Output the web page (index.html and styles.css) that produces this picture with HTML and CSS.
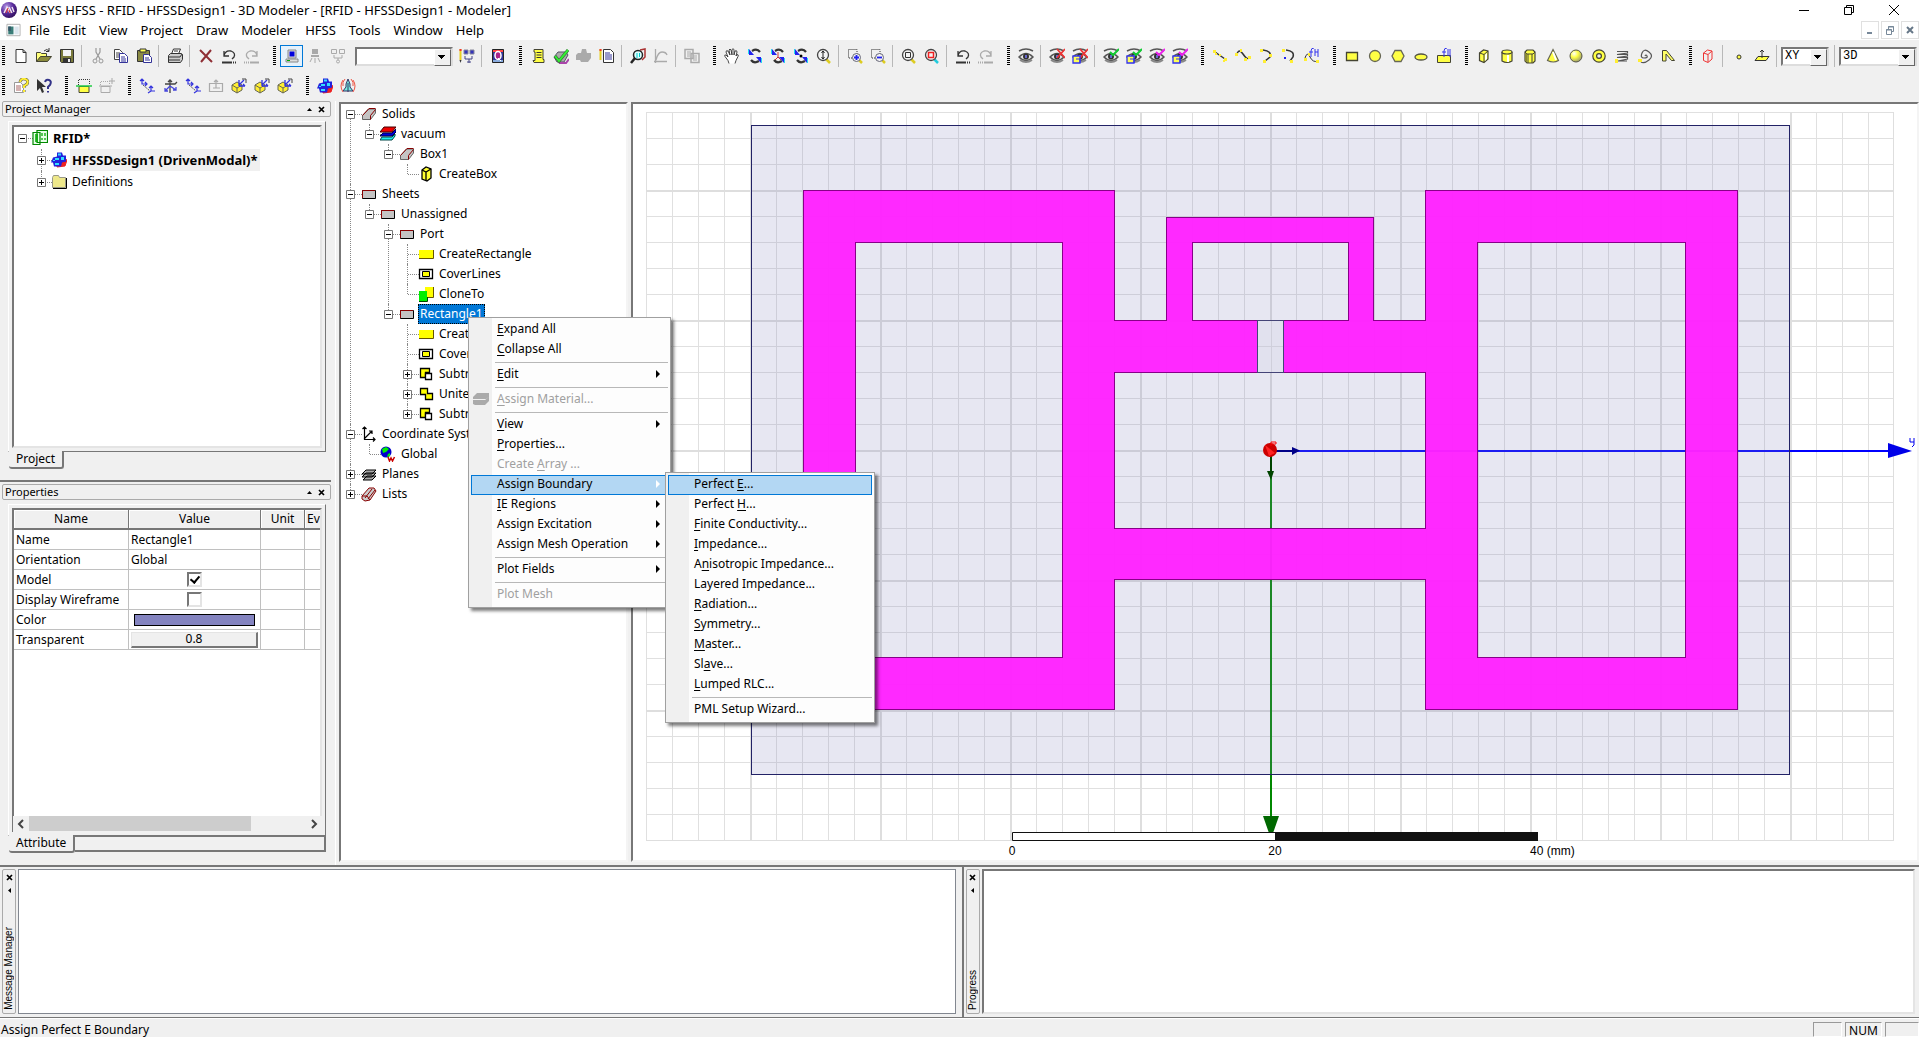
FILE: index.html
```html
<!DOCTYPE html>
<html lang="en">
<head>
<meta charset="utf-8">
<title>ANSYS HFSS - RFID - HFSSDesign1 - 3D Modeler</title>
<link rel="stylesheet" href="styles.css">
</head>
<body>
<svg class="sprite" aria-hidden="true">
  <defs>
    <radialGradient id="logo" cx=".35" cy=".3" r=".8"><stop offset="0" stop-color="#b79be8"/><stop offset=".5" stop-color="#5a2d9e"/><stop offset="1" stop-color="#2a0a50"/></radialGradient>
    <radialGradient id="ball" cx=".35" cy=".3" r=".8"><stop offset="0" stop-color="#fff"/><stop offset=".4" stop-color="#ff4"/><stop offset="1" stop-color="#887"/></radialGradient>
    <pattern id="minor" width="26" height="26" patternUnits="userSpaceOnUse"><path d="M0 0h26v1H1v25H0z" fill="#e0e0e0"/></pattern>
    <pattern id="major" width="130" height="130" patternUnits="userSpaceOnUse"><path d="M0 0h130v2H2v128H0z" fill="#dedede"/></pattern>
  </defs>
  <symbol id="i-new" viewBox="0 0 16 16"><path d="M3 1.500h7l3 3v10H3zM10 1.500v3h3" fill="#fff" stroke="#333"/></symbol>
  <symbol id="i-open" viewBox="0 0 16 16"><path d="M.5 13.500v-9h4l1 1h5v3" fill="#ffff7a" stroke="#443"/><path d="M.5 13.500l4-5h11l-4 5z" fill="#8c8c3c" stroke="#443"/><path d="M8 3q3-3 5 0M13 0v3.500h-3" fill="none" stroke="#333"/></symbol>
  <symbol id="i-save" viewBox="0 0 16 16"><path d="M1.500 1.500h13v13h-12l-1-1z" fill="#7a7a3c" stroke="#333"/><path d="M4 2h8v6H4z" fill="#f4f4f4"/><path d="M4 10h8v4H4z" fill="#333"/><path d="M9 11h2v3H9z" fill="#eee"/></symbol>
  <symbol id="i-cut" viewBox="0 0 16 16"><path d="M6 0v4l4 7M10 0v4l-4 7" fill="none" stroke="#999" stroke-width="1.200"/><circle cx="5" cy="13" r="2" fill="none" stroke="#999"/><circle cx="11" cy="13" r="2" fill="none" stroke="#999"/></symbol>
  <symbol id="i-copy" viewBox="0 0 16 16"><path d="M1.500 1.500h5l3 3v7h-8z" fill="#fff" stroke="#444"/><path d="M3 5h4M3 7h4M3 9h3" stroke="#444"/><path d="M6.500 5.500h5l3 3v6h-8z" fill="#fff" stroke="#339"/><path d="M8 9h4M8 11h5M8 13h5" stroke="#339"/></symbol>
  <symbol id="i-paste" viewBox="0 0 16 16"><path d="M1.500 2.500h12v11h-12z" fill="#8a8a44" stroke="#333"/><path d="M4 1h6v3H4z" fill="#ff5" stroke="#333"/><path d="M7.500 6.500h5l3 3v5h-8z" fill="#fff" stroke="#339"/><path d="M9 10h4M9 12h5" stroke="#339"/></symbol>
  <symbol id="i-print" viewBox="0 0 16 16"><path d="M4.500 6l2-5h7l-2 5z" fill="#fff" stroke="#333"/><path d="M1.500 7.500l2-2h11l1 1v5l-2 3h-12z" fill="#ccc" stroke="#333"/><path d="M2 9h11M2 12h11M13 9l2-3M7 3h4" stroke="#333"/></symbol>
  <symbol id="i-del" viewBox="0 0 16 16"><path d="M2 2l12 12M13 2L3 14" stroke="#8f2f35" stroke-width="2"/></symbol>
  <symbol id="i-undo" viewBox="0 0 16 16"><path d="M3 8q1-6 7-5 5 2 3 6l-2 2M3 3v5h5" fill="none" stroke="#333" stroke-width="1.300"/><path d="M1 14.500h9" stroke="#333" stroke-width="2"/><path d="M10 14.500h6" stroke="#333" stroke-width="2" stroke-dasharray="1 1"/></symbol>
  <symbol id="i-redo" viewBox="0 0 16 16"><path d="M13 8q-1-6-7-5-5 2-3 6l2 2M13 3v5H8" fill="none" stroke="#aaa" stroke-width="1.300"/><path d="M6 14.500h9" stroke="#aaa" stroke-width="2"/><path d="M0 14.500h6" stroke="#aaa" stroke-width="2" stroke-dasharray="1 1"/></symbol>
  <symbol id="i-pc" viewBox="0 0 16 16"><path d="M4 2h8v8H4z" fill="#ddd" stroke="#888"/><path d="M5.500 3.500h5v5h-5z" fill="#00d"/><path d="M2 11h12v3H2z" fill="#ddd" stroke="#888"/><path d="M3 12.500h3" stroke="#0a0"/></symbol>
  <symbol id="i-remote" viewBox="0 0 16 16"><path d="M5 1h6v5H5zM4 7h8v2H4z" fill="#aaa"/><path d="M8 10v5M5 10l-2 4M11 10l2 4" stroke="#aaa"/></symbol>
  <symbol id="i-dist" viewBox="0 0 16 16"><path d="M1.500 1.500h5v4h-5zM9.500 1.500h5v4h-5zM4 7v3h8V7M8 10v2" fill="none" stroke="#aaa"/><circle cx="8" cy="13.500" r="1.500" fill="none" stroke="#aaa"/></symbol>
  <symbol id="i-net" viewBox="0 0 16 16"><path d="M1.500 1v11" stroke="#e8d020" stroke-width="2"/><path d="M.5 2h2" stroke="#e33" stroke-width="2"/><path d="M.5 12l1 3 1-3" fill="#333"/><path d="M5 2h4v4H5zM11 2h4v4h-4z" fill="#33b" stroke="#889"/><path d="M6 8v3h7V8M10 11v4M8 14h4" fill="none" stroke="#448"/></symbol>
  <symbol id="i-q" viewBox="0 0 16 16"><path d="M2.500 1.500h11v13h-11z" fill="#339" stroke="#222"/><path d="M3 2h10v2H3z" fill="#f44"/><path d="M3 12h10v2H3z" fill="#8ad"/><ellipse cx="8" cy="7.500" rx="3" ry="4" fill="#a28" stroke="#fff" stroke-width="1.500"/><path d="M8 10l3 3" stroke="#fff"/></symbol>
  <symbol id="i-scroll" viewBox="0 0 16 16"><path d="M4 1.500h9v10h1v3H4l-1-2h2V4H4z" fill="#ff4" stroke="#443"/><path d="M6.500 4.500h5M6.500 7h5M6.500 9.500h5" stroke="#333"/></symbol>
  <symbol id="i-valid" viewBox="0 0 16 16"><path d="M1 9l4-5h8l2 3-4 7H4z" fill="#aaa" stroke="#556"/><path d="M6 15h7l3-4" stroke="#a4a" stroke-width="2" fill="none"/><path d="M2 8l4 5 9-11" fill="none" stroke="#363" stroke-width="3"/><path d="M2 8l4 5 9-11" fill="none" stroke="#3e3" stroke-width="2"/></symbol>
  <symbol id="i-blob" viewBox="0 0 16 16"><path d="M5 5l1-4h4l1 4h4v5l-3 4H5L4 12H0V7l2-2z" fill="#aaa"/></symbol>
  <symbol id="i-notes" viewBox="0 0 16 16"><path d="M1.500 1v11" stroke="#e8d020" stroke-width="2"/><path d="M.5 2h2" stroke="#e33" stroke-width="2"/><path d="M4.500 1.500h7l3 3v10h-10z" fill="#fff" stroke="#333"/><path d="M6 5h5M6 7h7M6 9h7M6 11h7" stroke="#339"/></symbol>
  <symbol id="i-find" viewBox="0 0 16 16"><path d="M10 2l5-1v8l-3 3" fill="none" stroke="#a33" stroke-width="1.500"/><circle cx="8" cy="7" r="4.500" fill="#dff" stroke="#222" stroke-width="1.500"/><path d="M7 5v5M9.500 5v4" stroke="#0cc"/><path d="M5 10l-4 5" stroke="#222" stroke-width="2.500"/></symbol>
  <symbol id="i-plot" viewBox="0 0 16 16"><path d="M2.500 1v14M1 13.500h13M3 12q2-8 6-8t5 3" fill="none" stroke="#aaa" stroke-width="1.300"/></symbol>
  <symbol id="i-report" viewBox="0 0 16 16"><path d="M1 1.500h8v9H1zM7 5.500h8v9H7z" fill="#f0f0f0" stroke="#aaa" stroke-width="1.500"/><path d="M3 4h4M3 6h3M3 8h3M9 8h4M9 10h4M9 12h4" stroke="#aaa"/></symbol>
  <symbol id="i-hand" viewBox="0 0 16 16"><path d="M5 15.500l-1-3-3-4q-1-2 1-1.500l2 2-2-5q0-2 2-1l2 4-1-5q1-2 2 0l1 5V1.500q1-1.500 2 0V7l1-4q2-1 2 1l-1 4 1-1.500q2 0 1 2l-2 4-1 3" fill="#fff" stroke="#333" stroke-width=".9"/></symbol>
  <symbol id="i-rot" viewBox="0 0 16 16"><path d="M5 3q5-3 8 1M12 13q-5 3-8-1" fill="none" stroke="#333" stroke-width="2.200"/><path d="M2 1v6h5z" fill="#22e"/><path d="M14 15V9H9z" fill="#22e"/><path d="M1.500 1v5M14.500 10v5" stroke="#2de"/></symbol>
  <symbol id="i-zoomv" viewBox="0 0 16 16"><path d="M10 11l4 4" stroke="#dc2" stroke-width="2.500"/><circle cx="7" cy="7" r="5.500" fill="#f4f4f4" stroke="#444" stroke-width="1.300"/><path d="M7 3v8M5.500 5L7 3l1.500 2M5.500 9L7 11l1.500-2" stroke="#222" fill="none"/></symbol>
  <symbol id="i-zin" viewBox="0 0 16 16"><path d="M10 8V1.500H1.500V10H6" fill="none" stroke="#333" stroke-dasharray="1 1"/><path d="M12 12l3 3" stroke="#dc2" stroke-width="2.500"/><circle cx="9.500" cy="9.500" r="4" fill="#f4f4f4" stroke="#667"/><path d="M9.500 7v5M7 9.500h5" stroke="#22e" stroke-width="1.800"/></symbol>
  <symbol id="i-zout" viewBox="0 0 16 16"><path d="M10 8V1.500H1.500V10H6" fill="none" stroke="#333" stroke-dasharray="1 1"/><path d="M12 12l3 3" stroke="#dc2" stroke-width="2.500"/><circle cx="9.500" cy="9.500" r="4" fill="#f4f4f4" stroke="#667"/><path d="M7 9.500h5" stroke="#22e" stroke-width="1.800"/></symbol>
  <symbol id="i-fit" viewBox="0 0 16 16"><path d="M10 11l4 4" stroke="#dc2" stroke-width="2.500"/><circle cx="7" cy="7" r="5.500" fill="#f4f4f4" stroke="#444" stroke-width="1.300"/><path d="M4.500 4.500h5v5h-5z" stroke="#333" fill="none"/></symbol>
  <symbol id="i-fitsel" viewBox="0 0 16 16"><path d="M10 11l4 4" stroke="#2cd" stroke-width="2.500"/><circle cx="7" cy="7" r="5.500" fill="#f4f4f4" stroke="#444" stroke-width="1.300"/><path d="M4.500 4.500h5v5h-5z" stroke="#e22" stroke-width="1.500" fill="none"/></symbol>
  <symbol id="i-eye" viewBox="0 0 16 16"><path d="M1 3q7-4 14 0" fill="none" stroke="#555" stroke-width="1.500"/><path d="M1 9q7-7 14 0-7 7-14 0z" fill="#e4e4e4" stroke="#555" stroke-width="1.500"/><circle cx="8" cy="8.500" r="3" fill="#333"/><path d="M7 7h2v3H7z" fill="#66c"/><path d="M2 12q6 4 12 0" fill="none" stroke="#888" stroke-width="2"/></symbol>
  <symbol id="i-x" viewBox="0 0 16 16"><path d="M8 1l8 9M16 1l-8 9" stroke="#e33" stroke-width="1.800"/></symbol>
  <symbol id="i-ckg" viewBox="0 0 16 16"><path d="M7 4l3 3 6-6" fill="none" stroke="#1c3" stroke-width="2"/></symbol>
  <symbol id="i-ckm" viewBox="0 0 16 16"><path d="M7 4l3 3 6-6" fill="none" stroke="#e2e" stroke-width="2"/></symbol>
  <symbol id="i-sub" viewBox="0 0 16 16"><path d="M1 8h7v7H1z" fill="#ff5" stroke="#33e" stroke-width="1.300"/><path d="M4 11h4v4" fill="none" stroke="#33e"/></symbol>
  <symbol id="i-line" viewBox="0 0 16 16"><path d="M3 4l10 7" stroke="#333" stroke-width="1.500"/><path d="M1 2h3v3H1zM7 6h2v2H7zM12 10h3v3h-3zM3 5h2v2H3zM11 12h2v2h-2z" fill="#fe3"/></symbol>
  <symbol id="i-spline" viewBox="0 0 16 16"><path d="M2 6q2-6 6 0t6 4" fill="none" stroke="#333" stroke-width="1.500"/><path d="M0 5h3v3H0zM5 1h2v3H5zM9 10h3v3H9zM13 8h3v3h-3z" fill="#fe3"/></symbol>
  <symbol id="i-arc" viewBox="0 0 16 16"><path d="M5 2q9 1 7 7l-5 4" fill="none" stroke="#333" stroke-width="1.500"/><path d="M2 1h3v3H2zM11 6h3v3h-3zM5 12h3v3H5z" fill="#fe3"/></symbol>
  <symbol id="i-arcc" viewBox="0 0 16 16"><path d="M5 2q9 1 7 7l-3 4" fill="none" stroke="#333" stroke-width="1.500"/><path d="M1 1h3v3H1zM9 12h3v3H9z" fill="#fe3"/><path d="M3 9h2v2H3z" fill="#22e"/></symbol>
  <symbol id="i-eq" viewBox="0 0 16 16"><path d="M1 10q2-7 5-1t8 4" fill="none" stroke="#333"/><path d="M0 10h3v3H0zM4 5h2v3H4zM12 12h3v3h-3z" fill="#fe3"/><path d="M10 0q-3 0-3 3v6M5 4h4M11 1v7M14 1v8M11 4h3" fill="none" stroke="#33e"/></symbol>
  <symbol id="i-rect" viewBox="0 0 16 16"><path d="M2.500 4.500h11v8h-11z" fill="#ff4" stroke="#443" stroke-width="1.300"/></symbol>
  <symbol id="i-circ" viewBox="0 0 16 16"><circle cx="8" cy="8" r="5.500" fill="#ff4" stroke="#665" stroke-width="1.300"/></symbol>
  <symbol id="i-poly" viewBox="0 0 16 16"><path d="M5 2.500h6l3 5.500-3 5.500H5L2 8z" fill="#ff4" stroke="#665" stroke-width="1.300"/></symbol>
  <symbol id="i-ell" viewBox="0 0 16 16"><ellipse cx="8" cy="9" rx="6" ry="3" fill="#ff4" stroke="#554" stroke-width="1.300"/></symbol>
  <symbol id="i-surf" viewBox="0 0 16 16"><path d="M1.500 7.500h13v7h-13z" fill="#ff4" stroke="#443"/><path d="M11 0q-3 0-3 3v6M6 4h4M12 1v7M14 1v8" fill="none" stroke="#33e"/></symbol>
  <symbol id="i-box" viewBox="0 0 16 16"><path d="M3.500 5l4-3 4.500 1v8l-4 3.500-4.500-2z" fill="#ff4" stroke="#443" stroke-width="1.200"/><path d="M3.500 5L8 6.500 12 3M8 6.500V14" fill="none" stroke="#443"/><path d="M9 7l2-2v6l-2 2z" fill="#fff"/></symbol>
  <symbol id="i-cyl" viewBox="0 0 16 16"><path d="M3 4v9q5 3 10 0V4" fill="#ff4" stroke="#443" stroke-width="1.200"/><ellipse cx="8" cy="4" rx="5" ry="2" fill="#ff4" stroke="#443" stroke-width="1.200"/><path d="M9 7v7" stroke="#fff" stroke-width="2" /></symbol>
  <symbol id="i-prism" viewBox="0 0 16 16"><path d="M3 4l2-2h6l2 2v9l-2 2H5l-2-2z" fill="#ff4" stroke="#443" stroke-width="1.200"/><path d="M3 4l2 2h6l2-2M6 6v9M10 6v9" fill="none" stroke="#443"/><path d="M3 5v8l2 1V6z" fill="#8a8a33"/></symbol>
  <symbol id="i-cone" viewBox="0 0 16 16"><path d="M8 1.500l5.500 11q-5 3-11 0z" fill="#ff4" stroke="#665" stroke-width="1.200"/><path d="M8 4l3 8" stroke="#fff" stroke-width="2"/></symbol>
  <symbol id="i-sph" viewBox="0 0 16 16"><circle cx="8" cy="8" r="6" fill="url(#ball)" stroke="#554"/></symbol>
  <symbol id="i-torus" viewBox="0 0 16 16"><circle cx="8" cy="8" r="4.300" fill="none" stroke="#443" stroke-width="5"/><circle cx="8" cy="8" r="4.300" fill="none" stroke="#ff4" stroke-width="2.600"/></symbol>
  <symbol id="i-helix" viewBox="0 0 16 16"><path d="M3 3.500h10.500v1.500L3 6.500h10.500V8L3 9.500h10.500V11L4 13h9" fill="none" stroke="#555" stroke-width="1.200"/><path d="M1 11h3v4H1z" fill="#fe3"/></symbol>
  <symbol id="i-spiral" viewBox="0 0 16 16"><path d="M8 8q1-2 2 0t-3 2-2-5 7-1 0 8-8 2" fill="none" stroke="#555" stroke-width="1.200"/><path d="M1 11h4v3H1z" fill="#fe3"/></symbol>
  <symbol id="i-bond" viewBox="0 0 16 16"><path d="M2.500 13V2.500h4l8 10h-3L6 6v7z" fill="#ff6" stroke="#443"/></symbol>
  <symbol id="i-reg" viewBox="0 0 16 16"><path d="M3.500 5l4-3 4.500 1v8l-4 3.500-4.500-2zM3.500 5L8 6.500 12 3M8 6.500V14" fill="none" stroke="#e33"/></symbol>
  <symbol id="i-pt" viewBox="0 0 16 16"><circle cx="8" cy="9" r="2" fill="#ff4" stroke="#333"/></symbol>
  <symbol id="i-plane" viewBox="0 0 16 16"><path d="M1 12.500l3-4h11l-3 4z" fill="#ff4" stroke="#333"/><path d="M8 2v8M6 4l2-2 2 2" fill="none" stroke="#333"/></symbol>
  <symbol id="i-help" viewBox="0 0 16 16"><path d="M1.500 4.500h6l3 3v7h-9z" fill="#fff" stroke="#999"/><path d="M3 8h5M3 10h5M3 12h5" stroke="#a66"/><path d="M7 4q1-4 5-3t2 5l-3 2v2M11 12v2" fill="none" stroke="#554" stroke-width="3"/><path d="M7 4q1-4 5-3t2 5l-3 2v2M11 12v2" fill="none" stroke="#fe3" stroke-width="2"/></symbol>
  <symbol id="i-whats" viewBox="0 0 16 16"><path d="M1 1v12l3-3 2 5 2-1-2-5h4z" fill="#333"/><path d="M9 4q1-3 4-2t1 5l-2 2v2M12 13v1.500" fill="none" stroke="#338" stroke-width="2"/></symbol>
  <symbol id="i-sec" viewBox="0 0 16 16"><path d="M2.500 7V1.500h11V7" fill="none" stroke="#333" stroke-dasharray="1 1"/><path d="M3 8.500h10v6H3z" fill="#ff4" stroke="#443"/><path d="M0 8h16" stroke="#2c4" stroke-width="1.500"/></symbol>
  <symbol id="i-secadd" viewBox="0 0 16 16"><path d="M1.500 7V3.500h9V7" fill="none" stroke="#aaa" stroke-dasharray="1 1"/><path d="M2 8.500h9v6H2zM0 8h13M13 0v6M10 3h6" fill="none" stroke="#aaa"/></symbol>
  <symbol id="i-cs1" viewBox="0 0 16 16"><path d="M3 1v5h5M1 3l2-2 2 2M6 4l2 2-2 2M12 8v5h4M12 13l-3 2M10 10l2-2 2 2" fill="none" stroke="#33d" stroke-width="1.200"/><path d="M4 7l7 6" stroke="#555" stroke-dasharray="2 1"/></symbol>
  <symbol id="i-cs2" viewBox="0 0 16 16"><path d="M8 15V2M6 4l2-2 2 2M3 6h10l2-2" fill="none" stroke="#444" stroke-width="1.300"/><path d="M8 8l-5 5M8 8l6 4M3 10v3h3M11 12h3V9" fill="none" stroke="#44d" stroke-width="1.300"/></symbol>
  <symbol id="i-csd" viewBox="0 0 16 16"><path d="M1.500 5.500h13v8h-13zM5 10h7M8 10V2M6 4l2-2 2 2" fill="none" stroke="#aaa" stroke-width="1.200"/></symbol>
  <symbol id="i-csf" viewBox="0 0 16 16"><path d="M1 7l5-3 5 3v5l-5 3-5-3z" fill="#fe3" stroke="#665"/><path d="M1 7l5 3 5-3M6 10v5" fill="none" stroke="#665"/><path d="M8 8V2M8 7l5-5M8 8h6M12 6l2 2" fill="none" stroke="#33d" stroke-width="1.300"/><path d="M11 1h4v4" fill="none" stroke="#444"/></symbol>
  <symbol id="i-mesh" viewBox="0 0 16 16"><path d="M6 15l8-1 2-6-2-1-8 7z" fill="#e22" stroke="#e22"/><path d="M6 .5h5l1 3h3v6l-4 1-1 4H3l-1-4H0l2-5 4-1z" fill="#22d"/><path d="M7 1.500h3v2H7zM4 6h4v2H4zM10 5h3v3h-3zM4 11h4v2H4zM2 8h2v1H2z" fill="#3df"/></symbol>
  <symbol id="i-ant" viewBox="0 0 16 16"><path d="M8 1l2 5v3l3 4H3l3-4V6z" fill="#7ed" stroke="#336"/><path d="M3 2Q-1 8 3 14M13 2q4 6 0 12M5 1Q2 4 3 8M11 1q3 3 2 7" fill="none" stroke="#e54"/><path d="M8 5v9" stroke="#336"/></symbol>
  <!-- model tree -->
  <symbol id="t-proj" viewBox="0 0 16 16"><path d="M5 .5h10.500v12H5zM1 2.500h7v12H1z" fill="#e8ffe8" stroke="#080" stroke-width="1.200"/><path d="M3 5h3M3 7h3M3 9h3M3 11h3M10 3v3M13 3v3M10 8v2M13 8v2" stroke="#0a0" stroke-width="1.300"/></symbol>
  <symbol id="t-folder" viewBox="0 0 16 16"><path d="M1.500 13.500v-10l1-2h5l1 2h6v10z" fill="#eee88a" stroke="#998"/><path d="M2 14.500h13.500V4" fill="none" stroke="#000"/></symbol>
  <symbol id="t-solid" viewBox="0 0 16 16"><path d="M1.500 13.500v-4l6-6.500h7v4l-5 6.500z" fill="#c4c4c4" stroke="#666"/><path d="M1.500 9.500L8 2.500h6.500M9.500 9.500v4M9.500 9.500l5-6" fill="none" stroke="#800"/></symbol>
  <symbol id="t-mat" viewBox="0 0 16 16"><path d="M0 6l4-5h12l-4 5z" fill="#e00" stroke="#400"/><path d="M0 10l3-3h9l4-4v3l-4 4z" fill="#00d" stroke="#004"/><path d="M0 14l2-3h10l3-3v2l-3 4z" fill="#2ee" stroke="#044"/></symbol>
  <symbol id="t-box" viewBox="0 0 16 16"><path d="M4 4l4-3 5 2v9l-4 3-5-2z" fill="#ff3" stroke="#000" stroke-width="1.300"/><path d="M4 4l4 2 5-3M8 6v9" fill="none" stroke="#000" stroke-width="1.300"/></symbol>
  <symbol id="t-sheet" viewBox="0 0 16 16"><path d="M1.500 4.500h13v8h-13z" fill="#c4c4c4" stroke="#000"/><path d="M1.500 12V4.500H14" fill="none" stroke="#800"/></symbol>
  <symbol id="t-rect" viewBox="0 0 16 16"><path d="M1 4h14v8H1z" fill="#ff0"/><path d="M1 12.500h14.500V4" fill="none" stroke="#650"/></symbol>
  <symbol id="t-cover" viewBox="0 0 16 16"><path d="M1.500 3.500h13v9h-13z" fill="#fff" stroke="#000" stroke-width="1.300"/><path d="M4.500 5.500h7v5h-7z" fill="#ff0" stroke="#000"/></symbol>
  <symbol id="t-clone" viewBox="0 0 16 16"><path d="M7 1h8v10H7z" fill="#ff0"/><path d="M9 11.500h6.500V1" fill="none" stroke="#650"/><path d="M1 5h8v10H1z" fill="#0e0"/><path d="M1 15.500h8.500V11" fill="none" stroke="#040"/></symbol>
  <symbol id="t-subt" viewBox="0 0 16 16"><path d="M2.500 2.500h9v4h-4v5h-5z" fill="#ff0" stroke="#000" stroke-width="1.300"/><path d="M7.500 7.500h6v6h-6z" fill="#fff" stroke="#000" stroke-width="1.300"/></symbol>
  <symbol id="t-unite" viewBox="0 0 16 16"><path d="M2.500 2.500h7v5h5v6h-7v-5h-5z" fill="#ff0" stroke="#000" stroke-width="1.300"/></symbol>
  <symbol id="t-cs" viewBox="0 0 16 16"><path d="M3.500 1v12.500H14M3 13l8-8M1.500 3l2-2 2 2M12 11.500l2 2-2 2M8 5h3v3" fill="none" stroke="#000" stroke-width="1.200"/></symbol>
  <symbol id="t-globe" viewBox="0 0 16 16"><circle cx="6" cy="6" r="5.500" fill="#00c"/><path d="M2 3l4-2 3 2-3 3-3 1zM8 8l2-1v3l-3 1z" fill="#0e0"/><path d="M8 11l1.500 4 1.500-3 1.500 3 2-4" fill="none" stroke="#c00" stroke-width="1.500"/></symbol>
  <symbol id="t-planes" viewBox="0 0 16 16"><path d="M1 8l4-4h10l-4 4zM1 11l4-4h10l-4 4zM2 14l4-4h9l-4 4z" fill="#aaa" stroke="#000"/></symbol>
  <symbol id="t-lists" viewBox="0 0 16 16"><path d="M1 10l7-8h5l2 3-6 9-5 1-3-2z" fill="#ccc" stroke="#800"/><path d="M4 12l7-9M7 13l7-9M1 10h5l3 4" fill="none" stroke="#800"/></symbol>
  <symbol id="plus" viewBox="0 0 9 9"><path d="M.5.5h8v8h-8z" fill="#fff" stroke="#777"/><path d="M2 4.500h5M4.500 2v5" stroke="#000"/></symbol>
  <symbol id="minus" viewBox="0 0 9 9"><path d="M.5.5h8v8h-8z" fill="#fff" stroke="#777"/><path d="M2 4.500h5" stroke="#000"/></symbol>
  <symbol id="pin-up" viewBox="0 0 9 9"><path d="M2 6l2.500-3L7 6z"/></symbol>
  <symbol id="pin-left" viewBox="0 0 9 9"><path d="M6 2L3 4.500 6 7z"/></symbol>
  <symbol id="close" viewBox="0 0 9 9"><path d="M2 2l5 5M7 2L2 7" stroke="#000" stroke-width="1.700"/></symbol>
</svg>

<header class="titlebar">
  <svg class="logo" viewBox="0 0 16 16" aria-hidden="true"><circle cx="8" cy="8" r="8" fill="url(#logo)"/><path d="M3 11l3-6 3 6M8 5l3 6M11 5l2 5" fill="none" stroke="#f4e8ee" stroke-width="1.400"/><path d="M5 11l2-5M9 11l-1-3" stroke="#d33"/></svg>
  <h1>ANSYS HFSS - RFID - HFSSDesign1 - 3D Modeler - [RFID - HFSSDesign1 - Modeler]</h1>
  <div class="winbtns">
    <button aria-label="Minimize"><svg viewBox="0 0 12 12"><path d="M1 6.500h10" stroke="#000"/></svg></button>
    <button aria-label="Restore"><svg viewBox="0 0 12 12"><path d="M1.500 3.500h7v7h-7zM3.500 3V1.500h7v7H9" fill="none" stroke="#000"/></svg></button>
    <button aria-label="Close"><svg viewBox="0 0 12 12"><path d="M1 1l10 10M11 1L1 11" stroke="#000"/></svg></button>
  </div>
</header>

<nav class="menubar">
  <svg class="docicon" viewBox="0 0 16 16" aria-hidden="true"><path d="M.5 1.500h15v13H.5z" fill="#fff" stroke="#aaa"/><path d="M2 4h6v9H2z" fill="#3a7d78"/><path d="M9 4h5v9H9z" fill="#dbe6ee"/><path d="M2 4h3v5H2z" fill="#356"/></svg>
  <button>File</button><button>Edit</button><button>View</button><button>Project</button><button>Draw</button><button>Modeler</button><button>HFSS</button><button>Tools</button><button>Window</button><button>Help</button>
  <div class="mdibtns">
    <button aria-label="Minimize document"><svg viewBox="0 0 12 12"><path d="M3 9h5" stroke="#789" stroke-width="2"/></svg></button>
    <button aria-label="Restore document"><svg viewBox="0 0 12 12"><path d="M2.500 5.500h5v5h-5zM4.500 5V2.500h5v5H8M2 6h6M4 3h6" fill="none" stroke="#789"/></svg></button>
    <button aria-label="Close document"><svg viewBox="0 0 12 12"><path d="M3 3l6 6M9 3L3 9" stroke="#678" stroke-width="2"/></svg></button>
  </div>
</nav>

<div class="toolbar" role="toolbar" aria-label="Main tools">
  <i class="grip"></i>
  <button aria-label="New"><svg><use href="#i-new"/></svg></button><button aria-label="Open"><svg><use href="#i-open"/></svg></button><button aria-label="Save"><svg><use href="#i-save"/></svg></button>
  <i class="sep"></i>
  <button aria-label="Cut"><svg><use href="#i-cut"/></svg></button><button aria-label="Copy"><svg><use href="#i-copy"/></svg></button><button aria-label="Paste"><svg><use href="#i-paste"/></svg></button>
  <i class="sep"></i>
  <button aria-label="Print"><svg><use href="#i-print"/></svg></button>
  <i class="sep"></i>
  <button aria-label="Delete"><svg><use href="#i-del"/></svg></button><button aria-label="Undo"><svg><use href="#i-undo"/></svg></button><button aria-label="Redo"><svg><use href="#i-redo"/></svg></button>
  <i class="grip"></i>
  <button class="on" aria-label="Local machine"><svg><use href="#i-pc"/></svg></button><button aria-label="Remote"><svg><use href="#i-remote"/></svg></button><button aria-label="Distributed"><svg><use href="#i-dist"/></svg></button>
  <span class="combo wide"><select aria-label="Machine"><option></option></select></span>
  <button aria-label="Edit machines"><svg><use href="#i-net"/></svg></button>
  <i class="sep"></i>
  <button aria-label="Queue"><svg><use href="#i-q"/></svg></button>
  <i class="grip"></i>
  <button aria-label="Solution setup"><svg><use href="#i-scroll"/></svg></button><button aria-label="Validate"><svg><use href="#i-valid"/></svg></button><button aria-label="Analyze"><svg><use href="#i-blob"/></svg></button><button aria-label="Notes"><svg><use href="#i-notes"/></svg></button>
  <i class="sep"></i>
  <button aria-label="Solution data"><svg><use href="#i-find"/></svg></button><button aria-label="Create report"><svg><use href="#i-plot"/></svg></button>
  <i class="sep"></i>
  <button aria-label="Copy report"><svg><use href="#i-report"/></svg></button>
  <i class="grip"></i>
  <button aria-label="Pan"><svg><use href="#i-hand"/></svg></button><button aria-label="Rotate"><svg><use href="#i-rot"/></svg></button><button aria-label="Rotate about axis"><svg><use href="#i-rot"/><path d="M8 4v5l-3 3M8 9l3 3" fill="none" stroke="#c33"/></svg></button><button aria-label="Rotate about centre"><svg><use href="#i-rot"/><circle cx="8" cy="8" r="1.500"/></svg></button><button aria-label="Dynamic zoom"><svg><use href="#i-zoomv"/></svg></button>
  <i class="sep"></i>
  <button aria-label="Zoom in"><svg><use href="#i-zin"/></svg></button><button aria-label="Zoom out"><svg><use href="#i-zout"/></svg></button>
  <i class="sep"></i>
  <button aria-label="Fit all"><svg><use href="#i-fit"/></svg></button><button aria-label="Fit selection"><svg><use href="#i-fitsel"/></svg></button>
  <i class="sep"></i>
  <button aria-label="Undo view"><svg><use href="#i-undo"/></svg></button><button aria-label="Redo view"><svg><use href="#i-redo"/></svg></button>
  <i class="grip"></i>
  <button aria-label="Visibility"><svg><use href="#i-eye"/></svg></button>
  <i class="sep"></i>
  <button aria-label="Hide selection"><svg><use href="#i-eye"/><use href="#i-x"/></svg></button><button aria-label="Hide in active view"><svg><use href="#i-eye"/><use href="#i-x"/><use href="#i-sub"/></svg></button>
  <i class="sep"></i>
  <button aria-label="Show selection"><svg><use href="#i-eye"/><use href="#i-ckg"/></svg></button><button aria-label="Show in active view"><svg><use href="#i-eye"/><use href="#i-ckg"/><use href="#i-sub"/></svg></button><button aria-label="Show all"><svg><use href="#i-eye"/><use href="#i-ckm"/></svg></button><button aria-label="Show all in active view"><svg><use href="#i-eye"/><use href="#i-ckm"/><use href="#i-sub"/></svg></button>
  <i class="grip"></i>
  <button aria-label="Line"><svg><use href="#i-line"/></svg></button><button aria-label="Spline"><svg><use href="#i-spline"/></svg></button><button aria-label="Three point arc"><svg><use href="#i-arc"/></svg></button><button aria-label="Centre arc"><svg><use href="#i-arcc"/></svg></button><button aria-label="Equation curve"><svg><use href="#i-eq"/></svg></button>
  <i class="grip"></i>
  <button aria-label="Rectangle"><svg><use href="#i-rect"/></svg></button><button aria-label="Circle"><svg><use href="#i-circ"/></svg></button><button aria-label="Polygon"><svg><use href="#i-poly"/></svg></button><button aria-label="Ellipse"><svg><use href="#i-ell"/></svg></button><button aria-label="Equation surface"><svg><use href="#i-surf"/></svg></button>
  <i class="grip"></i>
  <button aria-label="Box"><svg><use href="#i-box"/></svg></button><button aria-label="Cylinder"><svg><use href="#i-cyl"/></svg></button><button aria-label="Prism"><svg><use href="#i-prism"/></svg></button><button aria-label="Cone"><svg><use href="#i-cone"/></svg></button><button aria-label="Sphere"><svg><use href="#i-sph"/></svg></button><button aria-label="Torus"><svg><use href="#i-torus"/></svg></button><button aria-label="Helix"><svg><use href="#i-helix"/></svg></button><button aria-label="Spiral"><svg><use href="#i-spiral"/></svg></button><button aria-label="Bondwire"><svg><use href="#i-bond"/></svg></button>
  <i class="grip"></i>
  <button aria-label="Region"><svg><use href="#i-reg"/></svg></button>
  <i class="sep"></i>
  <button aria-label="Point"><svg><use href="#i-pt"/></svg></button><button aria-label="Plane"><svg><use href="#i-plane"/></svg></button>
  <i class="sep"></i>
  <span class="combo plane"><select aria-label="Drawing plane"><option>XY</option></select></span>
  <i class="sep"></i>
  <span class="combo mode"><select aria-label="Movement mode"><option>3D</option></select></span>
</div>

<div class="toolbar" role="toolbar" aria-label="Coordinate tools">
  <i class="grip"></i>
  <button aria-label="Help"><svg><use href="#i-help"/></svg></button><button aria-label="What is this"><svg><use href="#i-whats"/></svg></button>
  <i class="grip"></i>
  <button aria-label="Section"><svg><use href="#i-sec"/></svg></button><button aria-label="Add section"><svg><use href="#i-secadd"/></svg></button>
  <i class="grip"></i>
  <button aria-label="Offset system"><svg><use href="#i-cs1"/></svg></button><button aria-label="Rotated system"><svg><use href="#i-cs2"/></svg></button><button aria-label="Offset and rotated"><svg><use href="#i-cs1"/></svg></button><button aria-label="Object system"><svg><use href="#i-csd"/></svg></button><button aria-label="Face system"><svg><use href="#i-csf"/></svg></button><button aria-label="Edge system"><svg><use href="#i-csf"/></svg></button><button aria-label="Vertex system"><svg><use href="#i-csf"/></svg></button>
  <i class="grip"></i>
  <button aria-label="Mesh"><svg><use href="#i-mesh"/></svg></button><button aria-label="Antenna"><svg><use href="#i-ant"/></svg></button>
</div>

<main class="workspace">
  <aside class="dock">
    <section class="pane project">
      <header class="panehead"><h2>Project Manager</h2><button aria-label="Auto hide"><svg><use href="#pin-up"/></svg></button><button aria-label="Close pane"><svg><use href="#close"/></svg></button></header>
      <div class="frame">
        <ul class="tree big">
          <li><div class="row"><span class="ex"><svg><use href="#minus"/></svg></span><svg class="ti"><use href="#t-proj"/></svg><b class="lb">RFID*</b></div>
            <ul>
              <li><div class="row"><span class="ex"><svg><use href="#plus"/></svg></span><svg class="ti"><use href="#i-mesh"/></svg><b class="lb active">HFSSDesign1 (DrivenModal)*</b></div></li>
              <li><div class="row"><span class="ex"><svg><use href="#plus"/></svg></span><svg class="ti"><use href="#t-folder"/></svg><span class="lb">Definitions</span></div></li>
            </ul>
          </li>
        </ul>
      </div>
      <div class="tabs"><button class="tab">Project</button></div>
    </section>
    <section class="pane props">
      <header class="panehead"><h2>Properties</h2><button aria-label="Auto hide"><svg><use href="#pin-up"/></svg></button><button aria-label="Close pane"><svg><use href="#close"/></svg></button></header>
      <div class="frame">
        <div class="grid">
          <table>
            <thead><tr><th class="c1">Name</th><th class="c2">Value</th><th class="c3">Unit</th><th class="c4">Ev</th></tr></thead>
            <tbody>
              <tr><td>Name</td><td>Rectangle1</td><td></td><td></td></tr>
              <tr><td>Orientation</td><td>Global</td><td></td><td></td></tr>
              <tr><td><label for="model">Model</label></td><td class="mid"><input type="checkbox" id="model" checked></td><td></td><td></td></tr>
              <tr><td><label for="wire">Display Wireframe</label></td><td class="mid"><input type="checkbox" id="wire"></td><td></td><td></td></tr>
              <tr><td>Color</td><td class="mid"><button class="swatch" aria-label="Color"></button></td><td></td><td></td></tr>
              <tr><td>Transparent</td><td class="mid"><button class="value">0.8</button></td><td></td><td></td></tr>
            </tbody>
          </table>
        </div>
        <div class="hscroll"><svg viewBox="0 0 16 16"><path d="M10 4L6 8l4 4" fill="none" stroke="#444" stroke-width="2"/></svg><span class="track"><i></i></span><svg viewBox="0 0 16 16"><path d="M6 4l4 4-4 4" fill="none" stroke="#444" stroke-width="2"/></svg></div>
      </div>
      <div class="tabs boxed"><button class="tab">Attribute</button><span class="rest"></span></div>
    </section>
  </aside>

  <section class="modeltree" aria-label="Model tree">
    <ul class="tree">
      <li><div class="row"><span class="ex"><svg><use href="#minus"/></svg></span><svg class="ti"><use href="#t-solid"/></svg><span class="lb">Solids</span></div>
        <ul><li><div class="row"><span class="ex"><svg><use href="#minus"/></svg></span><svg class="ti"><use href="#t-mat"/></svg><span class="lb">vacuum</span></div>
          <ul><li><div class="row"><span class="ex"><svg><use href="#minus"/></svg></span><svg class="ti"><use href="#t-solid"/></svg><span class="lb">Box1</span></div>
            <ul><li><div class="row"><span class="ex"></span><svg class="ti"><use href="#t-box"/></svg><span class="lb">CreateBox</span></div></li></ul>
          </li></ul>
        </li></ul>
      </li>
      <li><div class="row"><span class="ex"><svg><use href="#minus"/></svg></span><svg class="ti"><use href="#t-sheet"/></svg><span class="lb">Sheets</span></div>
        <ul><li><div class="row"><span class="ex"><svg><use href="#minus"/></svg></span><svg class="ti"><use href="#t-sheet"/></svg><span class="lb">Unassigned</span></div>
          <ul>
            <li><div class="row"><span class="ex"><svg><use href="#minus"/></svg></span><svg class="ti"><use href="#t-sheet"/></svg><span class="lb">Port</span></div>
              <ul>
                <li><div class="row"><span class="ex"></span><svg class="ti"><use href="#t-rect"/></svg><span class="lb">CreateRectangle</span></div></li>
                <li><div class="row"><span class="ex"></span><svg class="ti"><use href="#t-cover"/></svg><span class="lb">CoverLines</span></div></li>
                <li><div class="row"><span class="ex"></span><svg class="ti"><use href="#t-clone"/></svg><span class="lb">CloneTo</span></div></li>
              </ul>
            </li>
            <li><div class="row"><span class="ex"><svg><use href="#minus"/></svg></span><svg class="ti"><use href="#t-sheet"/></svg><span class="lb selected">Rectangle1</span></div>
              <ul>
                <li><div class="row"><span class="ex"></span><svg class="ti"><use href="#t-rect"/></svg><span class="lb cut">CreateRectangle</span></div></li>
                <li><div class="row"><span class="ex"></span><svg class="ti"><use href="#t-cover"/></svg><span class="lb cut">CoverLines</span></div></li>
                <li><div class="row"><span class="ex"><svg><use href="#plus"/></svg></span><svg class="ti"><use href="#t-subt"/></svg><span class="lb cut">Subtract</span></div></li>
                <li><div class="row"><span class="ex"><svg><use href="#plus"/></svg></span><svg class="ti"><use href="#t-unite"/></svg><span class="lb cut">Unite</span></div></li>
                <li><div class="row"><span class="ex"><svg><use href="#plus"/></svg></span><svg class="ti"><use href="#t-subt"/></svg><span class="lb cut">Subtract</span></div></li>
              </ul>
            </li>
          </ul>
        </li></ul>
      </li>
      <li><div class="row"><span class="ex"><svg><use href="#minus"/></svg></span><svg class="ti"><use href="#t-cs"/></svg><span class="lb">Coordinate Systems</span></div>
        <ul><li><div class="row"><span class="ex"></span><svg class="ti"><use href="#t-globe"/></svg><span class="lb">Global</span></div></li></ul>
      </li>
      <li><div class="row"><span class="ex"><svg><use href="#plus"/></svg></span><svg class="ti"><use href="#t-planes"/></svg><span class="lb">Planes</span></div></li>
      <li><div class="row"><span class="ex"><svg><use href="#plus"/></svg></span><svg class="ti"><use href="#t-lists"/></svg><span class="lb">Lists</span></div></li>
    </ul>
  </section>

  <section class="viewport" aria-label="3D modeler view">
    <svg viewBox="-637 -346 1284 756" role="img" aria-label="RFID antenna model">
      <g shape-rendering="crispEdges">
        <rect x="-624" y="-338" width="1248" height="729" fill="url(#minor)"/>
        <rect x="-624" y="-338" width="1248" height="729" fill="url(#major)"/>
        <path d="M623.500-338V391M-624 390h1248" stroke="#dedede" stroke-width="1"/>
        <path d="M0 1h624" stroke="#00f" stroke-width="2"/>
        <path d="M1 0v370" stroke="#080" stroke-width="2"/>
        <path d="M-518.500-324.500h1038v649h-1038z" fill="#8686c0" fill-opacity=".2" stroke="#226"/>
        <path fill="#ff22ff" fill-opacity=".97" fill-rule="evenodd" stroke="#808" d="M-466.500-259.500h311v130h52v-103h207v103h52v-130h312v519h-312v-130h-311v130h-311zM-414.500-207.500v415h207v-415zM-77.500-207.500v78h156v-78zM-155.500-77.500v156h311v-156zM207.500-207.500v415h208v-415z"/>
        <path fill="#e1e1ee" stroke="#447" d="M-12.500-129.500h26v52h-26z"/>
        <path d="M-12-103.500h25M1-129v51" stroke="#cfcfdb"/>
      </g>
      <path d="M-7 366H9L2 386H0z" fill="#006800"/>
      <path d="M-3 21h7L1 30zM0 0h2v26H0z" fill="#040"/>
      <path d="M618-7v15l24-7z" fill="#0000e8"/>
      <path d="M22-3l8 3.500L22 5zM4 0h22v2H4z" fill="#008"/>
      <path d="M640-12v4h4M644-12v7l-2 2" fill="none" stroke="#00e" stroke-width="1"/>
      <circle cx="0" cy="0" r="7" fill="#c00"/><path d="M-5-5L5 3-1 6z" fill="#f22"/><path d="M1-4v-4h5v2H2" fill="none" stroke="#f00"/>
      <path d="M-257.500 382.500h263v8h-263z" fill="#fff" stroke="#111"/><path d="M5 382h263v9H5z" fill="#111"/>
      <text x="-258" y="405" text-anchor="middle">0</text><text x="5" y="405" text-anchor="middle">20</text><text x="260" y="405">40 (mm)</text>
    </svg>
  </section>

  <div class="menu context" role="menu">
    <button role="menuitem"><u>E</u>xpand All</button>
    <button role="menuitem"><u>C</u>ollapse All</button>
    <hr>
    <button role="menuitem" class="sub"><u>E</u>dit</button>
    <hr>
    <button role="menuitem" disabled><svg viewBox="0 0 16 16"><path d="M0 6l4-4h12v4l-3 2H0zM0 13V9h12l4-3v4l-4 4H2z" fill="#aaa"/></svg><u>A</u>ssign Material...</button>
    <hr>
    <button role="menuitem" class="sub"><u>V</u>iew</button>
    <button role="menuitem"><u>P</u>roperties...</button>
    <button role="menuitem" disabled>Create <u>A</u>rray ...</button>
    <button role="menuitem" class="sub hot">Assign Boundary</button>
    <button role="menuitem" class="sub"><u>I</u>E Regions</button>
    <button role="menuitem" class="sub">Assign Excitation</button>
    <button role="menuitem" class="sub">Assign Mesh Operation</button>
    <hr>
    <button role="menuitem" class="sub">Plot Fields</button>
    <hr>
    <button role="menuitem" disabled>Plot Mesh</button>
  </div>
  <div class="menu boundary" role="menu">
    <button role="menuitem" class="hot">Perfect <u>E</u>...</button>
    <button role="menuitem">Perfect <u>H</u>...</button>
    <button role="menuitem"><u>F</u>inite Conductivity...</button>
    <button role="menuitem"><u>I</u>mpedance...</button>
    <button role="menuitem">A<u>n</u>isotropic Impedance...</button>
    <button role="menuitem">Layered Impedance...</button>
    <button role="menuitem"><u>R</u>adiation...</button>
    <button role="menuitem"><u>S</u>ymmetry...</button>
    <button role="menuitem"><u>M</u>aster...</button>
    <button role="menuitem">Sl<u>a</u>ve...</button>
    <button role="menuitem"><u>L</u>umped RLC...</button>
    <hr>
    <button role="menuitem">PML Setup Wizard...</button>
  </div>
</main>

<section class="bottom">
  <div class="bpane messages"><header class="vhead"><button aria-label="Close pane"><svg><use href="#close"/></svg></button><button aria-label="Auto hide"><svg><use href="#pin-left"/></svg></button><h2>Message Manager</h2></header><div class="log"></div></div>
  <div class="bpane progress"><header class="vhead"><button aria-label="Close pane"><svg><use href="#close"/></svg></button><button aria-label="Auto hide"><svg><use href="#pin-left"/></svg></button><h2>Progress</h2></header><div class="log sunk"></div></div>
</section>

<footer class="status"><span>Assign Perfect E Boundary</span><span class="cell"></span><span class="cell num">NUM</span><span class="cell"></span></footer>
</body>
</html>
```
FILE: styles.css
```css
* { box-sizing: border-box; }
body {
  margin: 0;
  height: 100vh;
  display: flex;
  flex-direction: column;
  overflow: hidden;
  background: #f0f0f0;
  color: #000;
  font: 12px/20px "Noto Sans", "Open Sans", sans-serif;
}
button {
  font: inherit;
  color: inherit;
  background: none;
  border: 0;
  padding: 0;
  display: flex;
  align-items: center;
}
h1, h2 { margin: 0; font: inherit; }
ul { list-style: none; margin: 0; padding: 0; }
svg { flex: none; display: block; }
.sprite { position: absolute; width: 0; height: 0; }

/* title and menu */
.titlebar { display: flex; height: 20px; background: #fff; align-items: center; font-size: 13px; }
.logo { width: 16px; height: 16px; margin: 0 5px 0 1px; }
.winbtns, .mdibtns { display: flex; margin-left: auto; }
.winbtns button { width: 45px; height: 20px; justify-content: center; }
.winbtns svg, .mdibtns svg { width: 12px; height: 12px; }
.winbtns { margin-right: 3px; }
.menubar { display: flex; height: 20px; background: #fff; align-items: center; gap: 13px; padding-left: 6px; font-size: 13px; }
.menubar > button { height: 20px; padding-bottom: 1px; }
.titlebar h1 { padding-bottom: 1px; }
.menubar .docicon { width: 15px; height: 14px; margin-right: -5px; }
.mdibtns { gap: 2px; }
.mdibtns button { width: 18px; height: 18px; border: 1px solid #e0e0e0; justify-content: center; }

/* toolbars */
.toolbar { display: flex; flex: none; height: 30px; align-items: center; padding: 2px 2px 0 2px; }
.toolbar > button { width: 23px; height: 22px; flex: none; justify-content: center; }
.toolbar > button > svg { width: 16px; height: 16px; }
.toolbar .on { background: #e5f1fb; border: 1px solid #0078d7; }
.grip { width: 3px; height: 20px; margin: 0 4px 0 10px; flex: none; background: repeating-linear-gradient(#000 0 1px, transparent 1px 2px); }
.grip:first-child { margin-left: 0; }
.sep { width: 1px; height: 22px; margin: 0 4px 0 3px; flex: none; background: #b8b8b8; }
.combo { position: relative; flex: none; height: 19px; }
.combo select {
  appearance: none;
  display: block;
  width: 100%;
  height: 100%;
  margin: 0;
  padding: 0 2px;
  border: 2px solid;
  border-color: #777 #ddd #ddd #777;
  border-radius: 0;
  background: #fff;
  color: #000;
  font: 12px "Liberation Mono", monospace;
}
.combo::after {
  content: "";
  position: absolute;
  right: 2px;
  top: 2px;
  width: 15px;
  height: 15px;
  border: 1px solid;
  border-color: #fff #666 #666 #fff;
  background: linear-gradient(#000, #000) 3px 5px / 7px 1px no-repeat, linear-gradient(#000, #000) 4px 6px / 5px 1px no-repeat, linear-gradient(#000, #000) 5px 7px / 3px 1px no-repeat, linear-gradient(#000, #000) 6px 8px / 1px 1px no-repeat, #f0f0f0;
}
.wide { width: 98px; margin: 0 2px 0 6px; }
.plane { width: 48px; margin-right: 2px; }
.mode { flex: 1; min-width: 60px; }

/* workspace */
.workspace { position: relative; display: flex; flex: 1; min-height: 0; padding-top: 2px; }
.dock { display: flex; flex-direction: column; width: 336px; flex: none; margin-top: -1px; border-right: 1px solid #fff; padding-right: 4px; }
.pane { display: flex; flex-direction: column; padding-left: 2px; }
.project { height: 381px; border-bottom: 2px solid #777; }
.props { flex: 1; min-height: 0; padding-top: 2px; }
.panehead { display: flex; height: 16px; align-items: center; border: 1px solid #aaa; border-radius: 2px; padding: 0 4px 0 2px; gap: 3px; }
.panehead h2 { flex: 1; font-size: 11px; line-height: 14px; }
.panehead svg, .vhead svg { width: 9px; height: 9px; }
.frame { flex: 1; min-height: 0; display: flex; flex-direction: column; margin: 4px 5px 0 6px; border: 1px solid; border-color: #fff #777 #777 #fff; padding: 3px; }
.project .tree { flex: 1; background: #fff; border: 2px solid; border-color: #777 #e4e4e4 #e4e4e4 #777; }
.tabs { display: flex; height: 17px; margin: 0 5px 11px 7px; }
.tab { padding: 0 7px; height: 18px; margin-top: -1px; background: #f0f0f0; border: solid #777; border-width: 0 2px 2px 0; border-radius: 0 0 3px 3px; }
.props .tabs { margin-bottom: 12px; }
.rest { flex: 1; height: 16px; border: solid #777; border-width: 1px 2px 2px 0; }

.grid { flex: 1; overflow: hidden; background: #fff; border: 2px solid; border-color: #777 #e4e4e4 transparent #777; border-bottom: 0; }
table { border-collapse: separate; border-spacing: 0; table-layout: fixed; width: 307px; }
th { height: 20px; padding: 0; line-height: 18px; font-weight: 400; background: #f0f0f0; border: solid #777; border-width: 0 1px 2px 0; box-shadow: inset 1px 1px #fff; }
td { height: 20px; padding: 0 0 0 2px; line-height: 18px; border: solid #c0c0c0; border-width: 0 1px 1px 0; }
.c1 { width: 115px; }
.c2 { width: 132px; }
.c3 { width: 44px; }
.c4 { text-align: left; padding-left: 2px; }
.mid { padding: 0 2px; }
.mid input { appearance: none; display: block; width: 15px; height: 15px; margin: 0 auto; border: 2px solid; border-color: #777 #e4e4e4 #e4e4e4 #777; background: #fff; }
.mid input:checked::before { content: ""; display: block; width: 4px; height: 7px; margin: 0 0 0 3px; border: solid #000; border-width: 0 2px 2px 0; transform: rotate(40deg); }
.swatch { width: 121px; height: 12px; margin: 0 auto; background: #8484c0; border: 1px solid #000; }
.value { width: 100%; height: 16px; justify-content: center; line-height: 14px; background: #f0f0f0; border: solid; border-width: 1px 2px 2px 1px; border-color: #e4e4e4 #777 #777 #e4e4e4; }
.hscroll { display: flex; height: 16px; background: #f0f0f0; border: solid #777; border-width: 0 0 0 1px; }
.hscroll svg { width: 16px; height: 16px; }
.track { flex: 1; }
.track i { display: block; width: 80%; height: 15px; background: #cdcdcd; }

/* trees */
.tree ul { padding-left: 19px; }
.tree li { position: relative; }
.tree li::before { content: ""; position: absolute; left: 9px; top: 0; bottom: 0; border-left: 1px dotted #888; }
.tree li:last-child::before { bottom: auto; height: 10px; }
.tree > li:first-child::before { top: 10px; }
.tree > li:only-child::before { display: none; }
.row { display: flex; height: 20px; align-items: center; }
.ex { position: relative; display: flex; width: 19px; height: 20px; align-items: center; justify-content: center; }
.ex::after { content: ""; position: absolute; left: 10px; right: -2px; top: 10px; border-top: 1px dotted #888; }
.ex svg { position: relative; z-index: 1; width: 9px; height: 9px; }
.ti { position: relative; width: 16px; height: 16px; margin: 0 3px 0 1px; }
.lb { padding: 0 2px; white-space: nowrap; line-height: 20px; }
.tree:not(.big) .lb { padding-bottom: 0; }
.cut { width: 52px; overflow: hidden; }
.big .row { height: 22px; }
.big .ex { width: 17px; }
.big li::before { left: 8px; }
.big .lb { line-height: 22px; }
.big b { font-size: 13px; }
.active { background: #f0f0f0; }
.selected { background: #0078d7; color: #fff; outline: 1px dotted #000; outline-offset: -1px; }

.modeltree { width: 289px; flex: none; margin: 0 0 3px 3px; overflow: hidden; background: #fff; border: 2px solid; border-color: #777 #f4f4f4 #f4f4f4 #777; }
.viewport { flex: 1; min-width: 0; margin: 0 0 3px 3px; background: #fff; border: 2px solid; border-color: #777 #f4f4f4 #f4f4f4 #777; }
.viewport svg { width: 100%; height: 100%; }
.viewport text { font: 12px "Liberation Sans", sans-serif; }

/* pop-up menus */
.menu { position: absolute; z-index: 5; display: flex; flex-direction: column; padding: 2px; border: 1px solid #a0a0a0; background: linear-gradient(90deg, #f0f0f0 23px, #fdfdfd 23px); box-shadow: 3px 3px 3px rgba(0, 0, 0, .5); }
.context { left: 468px; top: 217px; width: 203px; }
.boundary { left: 665px; top: 372px; width: 210px; }
.menu button { position: relative; height: 20px; padding: 0 0 2px 26px; white-space: pre; border: 1px solid transparent; border-left-width: 0; }
.menu hr { width: calc(100% - 24px); height: 1px; margin: 2px 0 2px 24px; border: 0; background: #b8b8b8; }
.menu .hot { background: #b3d7f3; border: 1px solid #0078d7; padding-left: 25px; }
.menu :disabled { color: #a0a0a0; }
.menu button svg { position: absolute; left: 2px; width: 16px; height: 16px; }
.sub::after { content: ""; position: absolute; right: 7px; top: 4px; border: 4px solid transparent; border-left-color: #000; border-right: 0; }
.sub.hot::after { border-left-color: #fff; }
u { text-underline-offset: 2px; }

/* bottom docks */
.bottom { display: flex; flex: none; height: 153px; border: solid #777; border-width: 2px 0 1px; }
.bpane { display: flex; flex: 957 1 0; padding: 2px 6px 3px 2px; gap: 2px; }
.messages { flex-grow: 962; }
.progress { border-left: 2px solid #777; padding-right: 4px; }
.vhead { display: flex; flex-direction: column; align-items: center; width: 14px; border: 1px solid #aaa; border-radius: 2px; padding: 3px 0; gap: 4px; }
.vhead h2 { writing-mode: vertical-rl; transform: rotate(180deg); margin-top: auto; font: 10px/12px "Liberation Sans", sans-serif; white-space: nowrap; }
.log { flex: 1; background: #fff; border: 1px solid #828790; }
.sunk { border: 2px solid; border-color: #777 #e4e4e4 #e4e4e4 #777; }
.status { display: flex; flex: none; height: 19px; gap: 3px; padding: 3px 0 0 1px; border-top: 1px solid #fff; line-height: 16px; }
.status > :first-child { flex: 1; }
.cell { width: 29px; border: 1px solid; border-color: #999 #fff #fff #999; }
.num { width: 37px; text-align: center; }
.cell:last-child { width: 34px; }
```
